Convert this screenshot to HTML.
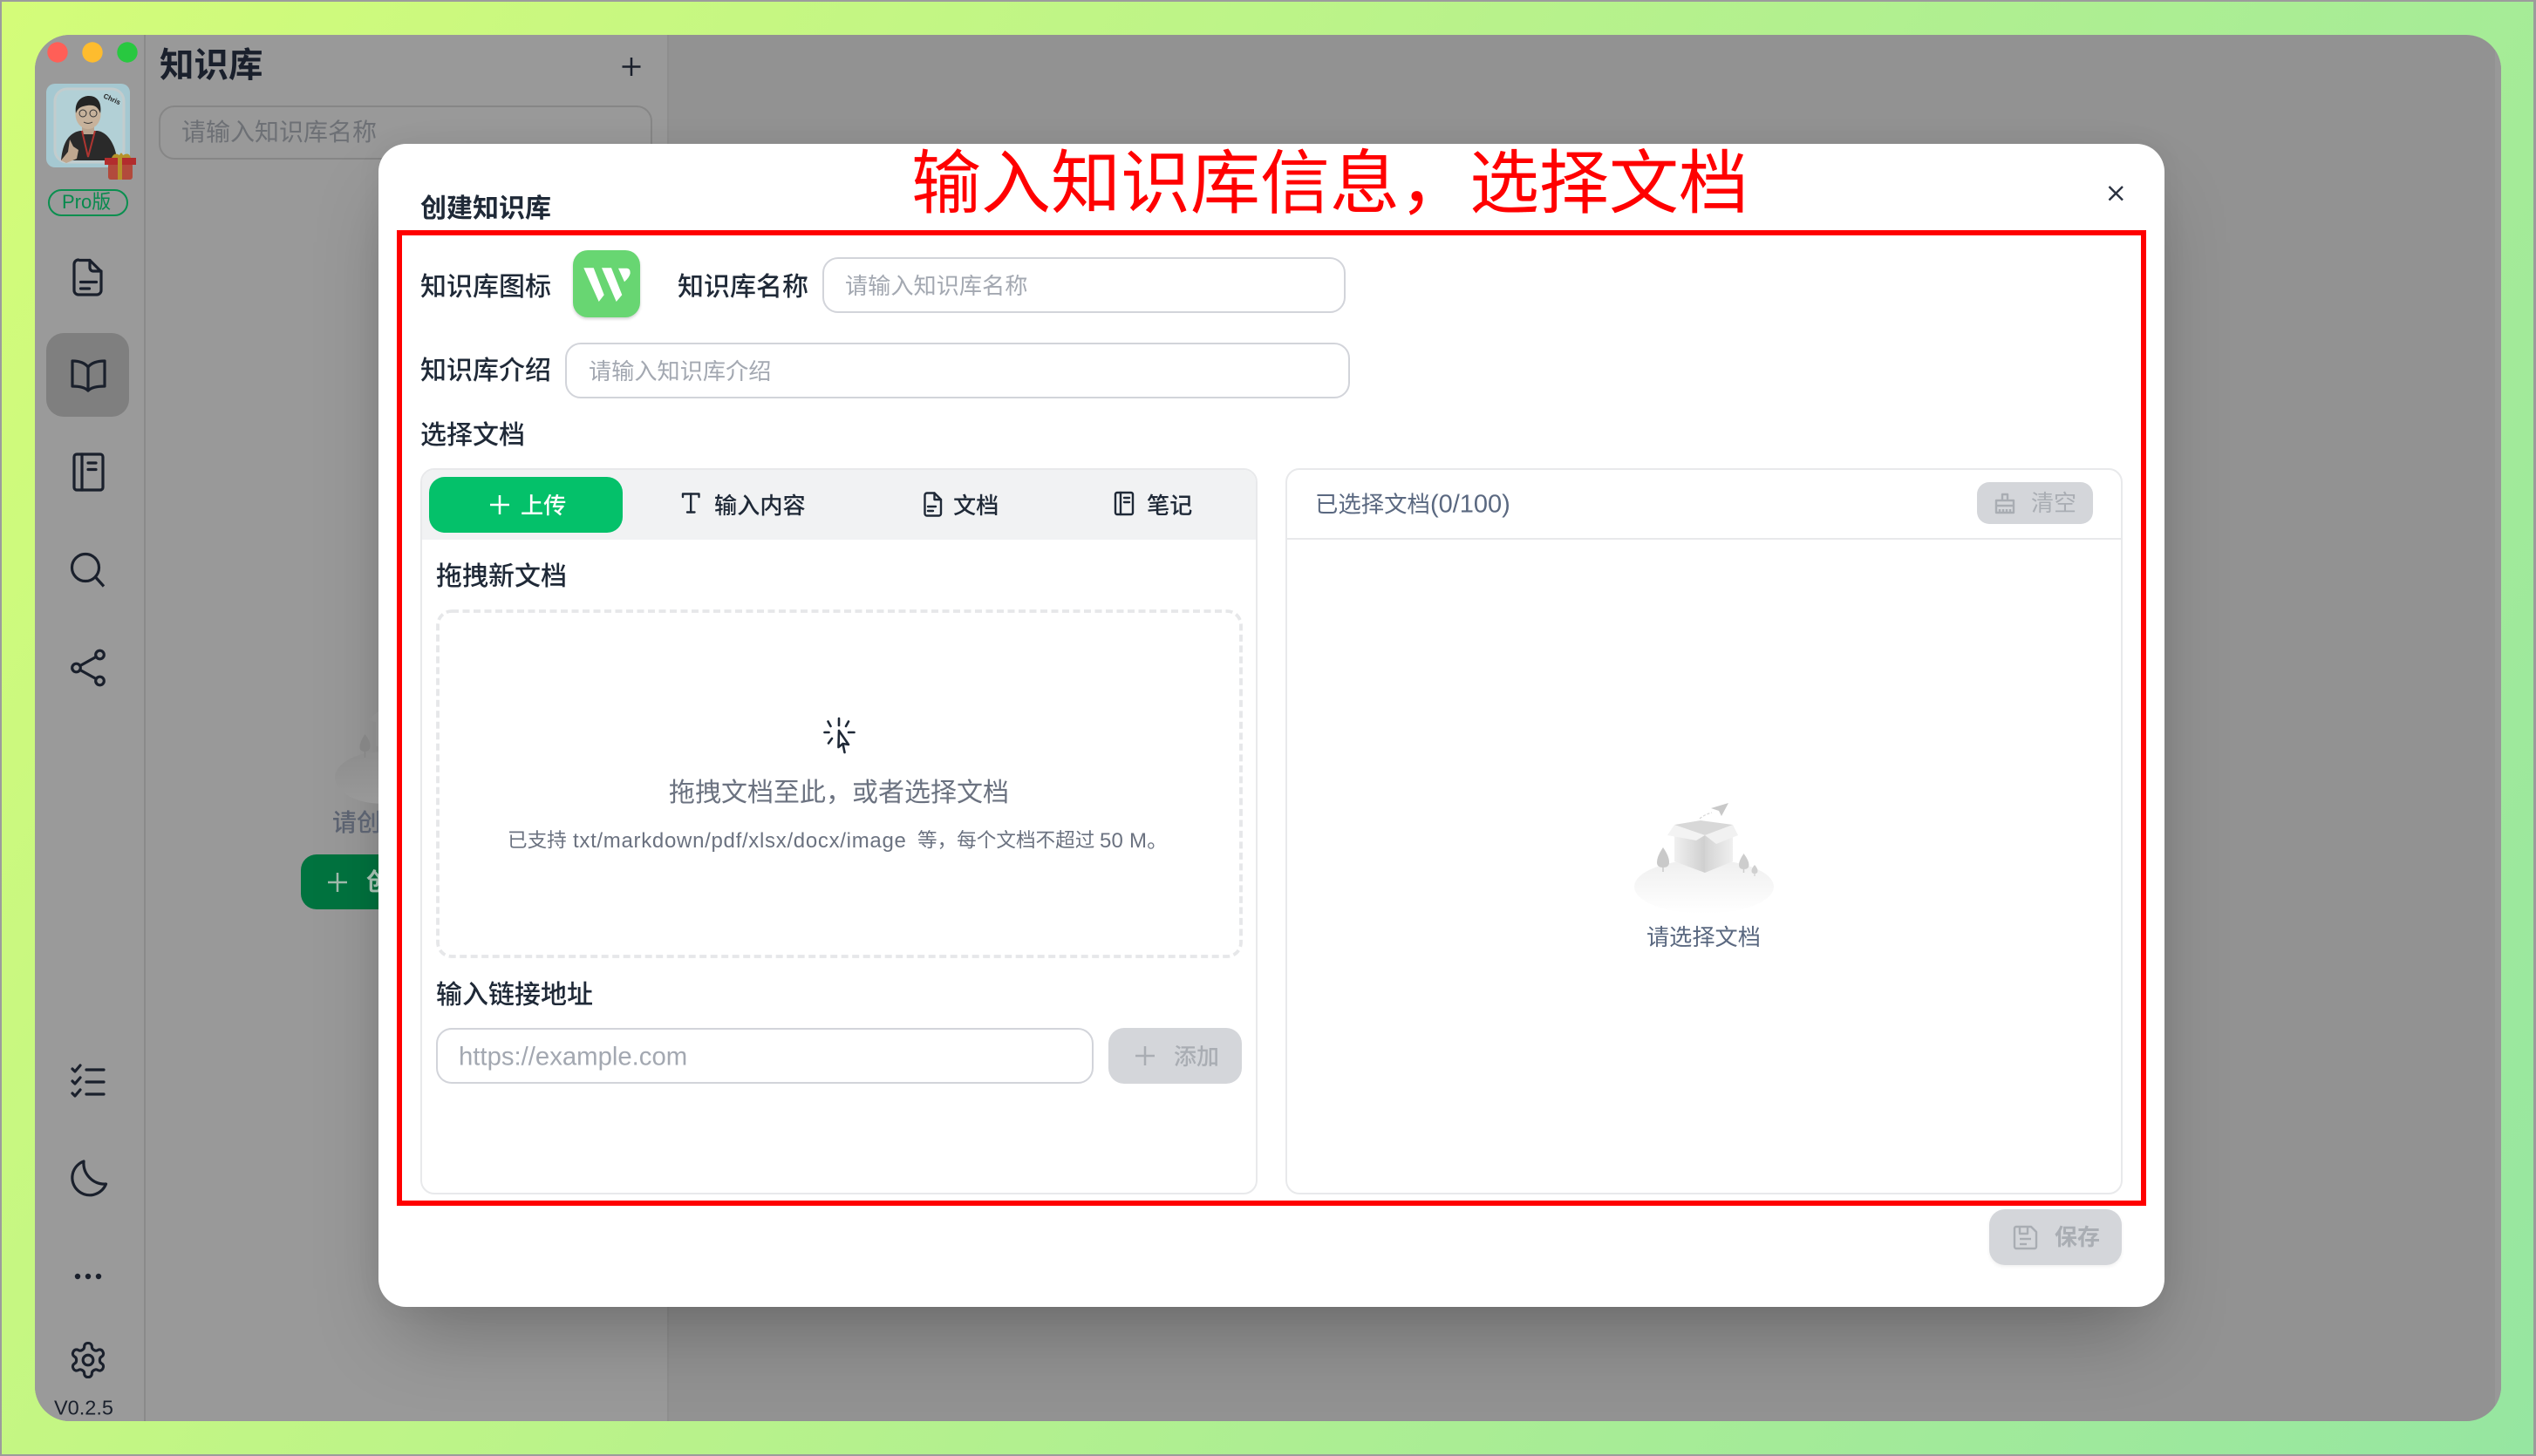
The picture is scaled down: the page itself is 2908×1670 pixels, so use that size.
<!DOCTYPE html>
<html lang="zh"><head><meta charset="utf-8"><title>知识库</title>
<style>
html,body{margin:0;padding:0}
body{width:2908px;height:1670px;overflow:hidden;position:relative;background:#9c9c9c;font-family:"Liberation Sans","Noto Sans CJK SC",sans-serif;color:#1f2937}
#bg{position:absolute;left:2px;top:2px;width:2903px;height:1666px;background:linear-gradient(120deg,#d4fc79 0%,#96e6a1 100%)}
#win{position:absolute;left:40px;top:40px;width:2828px;height:1590px;border-radius:40px;overflow:hidden;background:#929292}
.a{position:absolute}
.t{position:absolute;white-space:nowrap;line-height:1;transform:translateY(calc(-50% + 2px))}
svg{position:absolute;left:0;top:0;overflow:visible}
.input{position:absolute;box-sizing:border-box;background:#fff;border:2px solid #d2d4da;border-radius:18px}
.dis{position:absolute;background:#d4d6da;border-radius:18px}
.g{color:#a9adb3}
.ph{color:#a3a8b1;font-size:26.2px}
.l{font-size:30px;font-weight:500;color:#1f2937}
.s{font-size:22.6px;color:#6b7280}
</style></head><body>
<div id="bg"></div>
<div id="win">
  <div class="a" style="left:0;top:0;width:125px;height:1590px;background:#9a9a9a"></div>
  <div class="a" style="left:125px;top:0;width:2px;height:1590px;background:#8a8a8a"></div>
  <div class="a" style="left:127px;top:0;width:599px;height:1590px;background:#999"></div>
  <div class="a" style="left:725px;top:0;width:2px;height:1590px;background:#8e8e8e"></div>
  <div class="a" style="left:2821px;top:0;width:7px;height:1590px;background:#989898"></div>
  <div class="a" style="left:142px;top:81px;width:566px;height:62px;box-sizing:border-box;border:2px solid #868686;border-radius:18px"></div>
  <div class="a" style="left:305px;top:940px;width:200px;height:63px;border-radius:18px;background:#00733f"></div>
  <div class="a" style="left:13px;top:342px;width:95px;height:96px;border-radius:20px;background:#7f7f7f"></div>
  <div class="a" style="left:394px;top:125px;width:2048px;height:1334px;border-radius:32px;box-shadow:0 46px 93px -22px rgba(0,0,0,.28),0 0 30px rgba(0,0,0,.05)"></div>
</div>

<div class="t" style="left:183px;top:74px;font-size:39.500px;font-weight:700;color:#1a202c">知识库</div>
<div class="t" style="left:208px;top:150px;font-size:28px;color:#6d7075">请输入知识库名称</div>
<div class="t" style="left:381px;top:942px;font-size:28px;color:#5b6270;font-weight:500">请创建</div>
<div class="t" style="left:420px;top:1010px;font-size:28px;color:#9fb8aa;font-weight:700">创建</div>
<div class="t" style="left:71px;top:230px;font-size:22px;color:#078a4d">Pro版</div>
<div class="a" style="left:55px;top:217px;width:92px;height:31px;box-sizing:border-box;border:2.5px solid #0a8f4f;border-radius:16px"></div>
<div class="t" style="left:62px;top:1613px;font-size:23.500px;color:#1a202c">V0.2.5</div>

<!-- sidebar svg -->
<svg width="2908" height="1670" viewBox="0 0 2908 1670" fill="none">
  <defs>
    <linearGradient id="hill" x1="0" y1="0" x2="0" y2="1"><stop offset="0" stop-color="#efefef"/><stop offset="1" stop-color="#fff"/></linearGradient>
    <linearGradient id="hill2" x1="0" y1="0" x2="0" y2="1"><stop offset="0" stop-color="#8d8d8d"/><stop offset="1" stop-color="#999"/></linearGradient>
    <linearGradient id="boxl" x1="0" y1="0" x2="1" y2="0"><stop offset="0" stop-color="#f0f0f0"/><stop offset="1" stop-color="#cfcfcf"/></linearGradient>
    <linearGradient id="boxr" x1="0" y1="0" x2="1" y2="0"><stop offset="0" stop-color="#d4d4d4"/><stop offset="1" stop-color="#efefef"/></linearGradient>
  </defs>
  <circle cx="66" cy="60" r="11.7" fill="#ff5f57"/><circle cx="106" cy="60" r="11.7" fill="#febc2e"/><circle cx="146" cy="60" r="11.7" fill="#28c840"/>
  <rect x="53" y="96" width="96" height="96" rx="10" fill="#a5c8d1"/>
  <rect x="63" y="102" width="79" height="84" rx="14" fill="#b2d0d6" stroke="#c2cccd" stroke-width="3"/>
  <path d="M70 184 C72 162 80 152 92 150 L112 150 C124 152 132 166 134 182 L120 184 Z" fill="#2a2a2a"/>
  <path d="M70 184 L78 174 L80 160 L84 168 L90 172 L88 182 L76 187 Z" fill="#bfa78f"/>
  <rect x="94" y="140" width="14" height="14" fill="#b9a48f"/>
  <ellipse cx="101" cy="131" rx="14.5" ry="17" fill="#c7b29b"/>
  <path d="M87 130 C85 116 94 110 102 110 C112 110 117 118 115 130 C112 122 108 120 100 121 C93 122 89 124 87 130 Z" fill="#242424"/>
  <circle cx="95" cy="130" r="4" stroke="#333" stroke-width="1"/><circle cx="107" cy="130" r="4" stroke="#333" stroke-width="1"/>
  <path d="M96 140 q5 3 10 0" stroke="#333" stroke-width="1"/>
  <path d="M94 150 L101 180 L109 150" stroke="#ae3531" stroke-width="2"/>
  <text x="118" y="112" font-size="8" font-weight="700" fill="#222" font-family="Liberation Sans" transform="rotate(24 118 112)">Chris</text>
  <path d="M128 181 q3-7 9-3 q2-5 4 0 q7-4 9 3z" fill="#b5922a"/>
  <rect x="124" y="187" width="28" height="19" rx="3" fill="#b24a3c"/>
  <rect x="120" y="181" width="36" height="8" fill="#b22d2d"/>
  <rect x="135" y="181" width="5" height="25" fill="#b5922a"/>

  <g stroke="#1a202c" stroke-width="3.2" stroke-linecap="round" stroke-linejoin="round">
    <path d="M91 298.5 h12 l13 13 v21.5 a5 5 0 0 1-5 5 h-21 a5 5 0 0 1-5-5 v-30 a5 5 0 0 1 5-5 z"/>
    <path d="M103 298.5 v8.5 a4 4 0 0 0 4 4 h9"/><path d="M92.5 323.5 h18"/><path d="M92.5 331 h10"/>
    <path d="M83 414 c7 0 14 2 18 7 c4-5 11-7 19-7 v29 c-8 0-15 1-19 5 c-4-4-11-5-18-5 z"/><path d="M101 421 v27"/>
    <rect x="85" y="521" width="33" height="41" rx="3"/><path d="M94 521 v41"/><path d="M101 531 h9"/><path d="M101 538.5 h9"/>
    <circle cx="98" cy="651" r="15.5"/><path d="M110 662.500 l9 10" stroke-linecap="butt"/>
    <circle cx="87.5" cy="766" r="4.8"/><circle cx="114.5" cy="751" r="4.8"/><circle cx="114.5" cy="781" r="4.8"/>
    <path d="M92 763.5 L110 753.5"/><path d="M92 768.5 L110 778.5"/>
    <path d="M83 1226 l3 3 l6-7"/><path d="M83 1240 l3 3 l6-7"/><path d="M83 1254 l3 3 l6-7"/>
    <path d="M99 1227 h20"/><path d="M99 1241 h20"/><path d="M99 1255 h20"/>
    <path d="M96 1332 a20 20 0 1 0 25.5 26 a24 24 0 0 1 -25.5 -26 z"/>
    <g transform="translate(77.6,1536.6) scale(1.95)" stroke-width="1.6">
      <path d="M12.22 2h-.44a2 2 0 0 0-2 2v.18a2 2 0 0 1-1 1.73l-.43.25a2 2 0 0 1-2 0l-.15-.08a2 2 0 0 0-2.73.73l-.22.38a2 2 0 0 0 .73 2.73l.15.1a2 2 0 0 1 1 1.72v.51a2 2 0 0 1-1 1.74l-.15.09a2 2 0 0 0-.73 2.73l.22.38a2 2 0 0 0 2.73.73l.15-.08a2 2 0 0 1 2 0l.43.25a2 2 0 0 1 1 1.73V20a2 2 0 0 0 2 2h.44a2 2 0 0 0 2-2v-.18a2 2 0 0 1 1-1.73l.43-.25a2 2 0 0 1 2 0l.15.08a2 2 0 0 0 2.73-.73l.22-.39a2 2 0 0 0-.73-2.73l-.15-.08a2 2 0 0 1-1-1.74v-.5a2 2 0 0 1 1-1.74l.15-.09a2 2 0 0 0 .73-2.73l-.22-.38a2 2 0 0 0-2.73-.73l-.15.08a2 2 0 0 1-2 0l-.43-.25a2 2 0 0 1-1-1.73V4a2 2 0 0 0-2-2z"/>
      <circle cx="12" cy="12" r="3"/>
    </g>
  </g>
  <circle cx="89" cy="1464" r="3.2" fill="#1a202c"/><circle cx="101" cy="1464" r="3.2" fill="#1a202c"/><circle cx="113" cy="1464" r="3.2" fill="#1a202c"/>
  <path d="M724 66 v21 M713.500 76.500 h21" stroke="#1a202c" stroke-width="2.5"/>
  <path d="M387 1012 h-11 M387 1012 h11 M387 1001 v22" stroke="#9fb8aa" stroke-width="2.5"/>
  <ellipse cx="440" cy="892" rx="56" ry="30" fill="url(#hill2)"/>
  <path d="M418.500 842 q7 9 6 15 q-1 5-6 5 q-6 0-6-5 q0-6 6-15z" fill="#858585"/><path d="M418.500 860 v9" stroke="#858585" stroke-width="1.5"/>
  <path d="M421 826 l13-10 v40 h-3 v-28 z" fill="#8d8d8d"/>
</svg>

<!-- modal -->
<div class="a" style="left:434px;top:165px;width:2048px;height:1334px;background:#fff;border-radius:32px"></div>
<div class="t" style="left:482px;top:238px;font-size:30px;font-weight:700">创建知识库</div>
<div class="t" style="left:1045px;top:209px;font-size:80px;color:#ff0000">输入知识库信息，选择文档</div>

<div class="t l" style="left:482px;top:328px">知识库图标</div>
<div class="a" style="left:657px;top:287px;width:77px;height:77px;border-radius:17px;background:#68d672;box-shadow:0 2px 3px rgba(0,0,0,.18)"></div>
<div class="t l" style="left:777px;top:328px">知识库名称</div>
<div class="input" style="left:943px;top:295px;width:600px;height:64px"></div>
<div class="t ph" style="left:969px;top:326px">请输入知识库名称</div>
<div class="t l" style="left:482px;top:424px">知识库介绍</div>
<div class="input" style="left:648px;top:393px;width:900px;height:64px"></div>
<div class="t ph" style="left:675px;top:424px">请输入知识库介绍</div>
<div class="t l" style="left:482px;top:498px">选择文档</div>

<!-- left panel -->
<div class="a" style="left:482px;top:537px;width:960px;height:833px;box-sizing:border-box;border:2px solid #e8e9eb;border-radius:16px;overflow:hidden;background:#fff">
  <div class="a" style="left:-2px;top:-2px;width:960px;height:82px;background:#f1f2f3"></div>
</div>
<div class="a" style="left:492px;top:547px;width:222px;height:64px;border-radius:18px;background:#04c16a"></div>
<div class="t" style="left:597px;top:578px;font-size:26.200px;color:#fff;font-weight:500">上传</div>
<div class="t" style="left:819px;top:578px;font-size:26.200px;font-weight:500">输入内容</div>
<div class="t" style="left:1093px;top:578px;font-size:26.200px;font-weight:500">文档</div>
<div class="t" style="left:1315px;top:578px;font-size:26.200px;font-weight:500">笔记</div>
<div class="t l" style="left:500px;top:660px">拖拽新文档</div>
<div class="t" style="left:767px;top:908px;font-size:30px;color:#6b7280">拖拽文档至此，或者选择文档</div>
<div class="t s" style="left:582px;top:963px">已支持</div>
<div class="t s" style="left:657px;top:963px;font-size:24px;letter-spacing:.7px">txt/markdown/pdf/xlsx/docx/image</div>
<div class="t s" style="left:1052px;top:963px">等，每个文档不超过</div>
<div class="t s" style="left:1261px;top:963px;font-size:24px;letter-spacing:.2px">50 M。</div>
<div class="t l" style="left:500px;top:1140px">输入链接地址</div>
<div class="input" style="left:500px;top:1179px;width:754px;height:64px"></div>
<div class="t" style="left:526px;top:1210px;font-size:29.300px;color:#a3a8b1">https://example.com</div>
<div class="dis" style="left:1271px;top:1179px;width:153px;height:64px"></div>
<div class="t g" style="left:1346px;top:1210px;font-size:26px;font-weight:500">添加</div>

<!-- right panel -->
<div class="a" style="left:1474px;top:537px;width:960px;height:833px;box-sizing:border-box;border:2px solid #e8e9eb;border-radius:16px"></div>
<div class="a" style="left:1476px;top:617px;width:956px;height:2px;background:#e8e9eb"></div>
<div class="t" style="left:1508px;top:577px;font-size:26.400px;color:#5a6880">已选择文档<span style="font-size:29px">(0/100)</span></div>
<div class="dis" style="left:2267px;top:553px;width:133px;height:48px;border-radius:14px"></div>
<div class="t g" style="left:2329px;top:575px;font-size:26px">清空</div>
<div class="t" style="left:1888px;top:1073px;font-size:26.200px;color:#5a6880">请选择文档</div>
<div class="dis" style="left:2281px;top:1387px;width:152px;height:64px;box-shadow:0 2px 4px rgba(0,0,0,.06)"></div>
<div class="t g" style="left:2356px;top:1417px;font-size:26px;font-weight:700">保存</div>

<svg width="2908" height="1670" viewBox="0 0 2908 1670" fill="none">
  <path d="M669.300 307.300 H680.700 L692.700 338.300 L686.700 346 Z" fill="#fff"/>
  <path d="M690 307.300 H701 L713.300 338.300 L706.700 346 Z" fill="#fff"/>
  <path d="M709 307.700 H719 Q722.700 308 722.700 313.300 Q722 318 716 323.300 Z" fill="#fff"/>

  <path d="M573 568 v22 M562 579 h22" stroke="#fff" stroke-width="2.500"/>
  <g stroke="#1f2937" stroke-width="2.400" stroke-linecap="round" stroke-linejoin="round">
    <path d="M783 570 v-3.500 h18.500 v3.500"/><path d="M792.200 566.500 v21"/><path d="M788 587.500 h8.500"/>
    <path d="M1063 565.500 h8.500 l7.500 7.500 v16 a2.500 2.500 0 0 1-2.500 2.500 h-13.500 a2.500 2.500 0 0 1-2.500-2.500 v-21 a2.500 2.500 0 0 1 2.500-2.500 z"/>
    <path d="M1071.500 565.500 v7.500 h7.500"/><path d="M1064 581 h9"/><path d="M1064 586 h6"/>
    <rect x="1279" y="565" width="20" height="25" rx="2"/><path d="M1285 565 v25"/><path d="M1289 571 h6"/><path d="M1289 576 h6"/>
  </g>
  <rect x="502" y="701" width="921" height="396" rx="16" stroke="#e6e7e9" stroke-width="3.800" stroke-dasharray="8 4.500"/>
  <g stroke="#1f2937" stroke-width="2.600" stroke-linecap="round" stroke-linejoin="round">
    <path d="M962 824 v8"/><path d="M973 827.500 l-3 5.500"/><path d="M949.500 827.500 l3 5.500"/><path d="M945.500 840 h5"/><path d="M973 840 h6.500"/><path d="M954 847 l-4 5.500"/>
    <path d="M962 838 L973 854 L966.500 853 L968.500 863 M962 838 L961.500 857 L966.500 853" />
  </g>
  <path d="M1313 1200 v22 M1302 1211 h22" stroke="#a9adb3" stroke-width="2.500"/>
  <g stroke="#a9adb3" stroke-width="2.400" stroke-linejoin="round">
    <path d="M2296 574 v-7 h6 v7"/><path d="M2289 574 h20 v14 h-20 z"/><path d="M2289 580 h20"/><path d="M2293 584 v5 M2297 584 v5 M2301 584 v5 M2305 584 v5"/>
    <path d="M2312 1407 h17 l6 6 v17 a2 2 0 0 1-2 2 h-21 a2 2 0 0 1-2-2 v-21 a2 2 0 0 1 2-2 z"/>
    <path d="M2316 1407 v8 h9 v-8"/><path d="M2316 1421 h13"/><path d="M2316 1427 h8"/>
  </g>
  <!-- illustration -->
  <ellipse cx="1954" cy="1017" rx="80" ry="31" fill="url(#hill)"/>
  <path d="M1907 972 q7 10 7 17 q0 6-7 6 q-7 0-7-6 q0-7 7-17z" fill="#c9c9c9"/><path d="M1907 993 v7" stroke="#c9c9c9" stroke-width="1.500"/>
  <path d="M1999.500 979 q6 8 6 13 q0 5-6 5 q-5.500 0-5.500-5 q0-5 5.500-13z" fill="#cdcdcd"/><path d="M1999.500 996 v5" stroke="#cdcdcd" stroke-width="1.500"/>
  <path d="M2012 992 q3.500 4 3.500 7 q0 3-3.500 3 q-3.500 0-3.500-3 q0-3 3.500-7z" fill="#d0d0d0"/><path d="M2012 1001 v4" stroke="#d0d0d0" stroke-width="1.200"/>
  <path d="M1920 946 L1955 958 V1001 L1920 988 Z" fill="url(#boxl)"/>
  <path d="M1955 958 L1987 946 V988 L1955 1001 Z" fill="url(#boxr)"/>
  <path d="M1920 946 L1950 941 L1987 946 L1955 958 Z" fill="#d8d8d8"/>
  <path d="M1920 946 L1912 958 L1945 964 L1955 958 Z" fill="#f3f3f3"/>
  <path d="M1987 946 L1993 958 L1968 968 L1955 958 Z" fill="#f1f1f1"/>
  <path d="M1982 921 L1962 927 L1971 930 L1974 936 Z" fill="#c9c9c9"/>
  <path d="M1949 939 q6-5 14-7" stroke="#d5d5d5" stroke-width="1.200" stroke-dasharray="3 2"/>
  <path d="M2418.500 214 L2434 229.500 M2434 214 L2418.500 229.500" stroke="#2a3140" stroke-width="2.400"/>
</svg>
<div class="a" style="left:455px;top:264px;width:2006px;height:1119px;box-sizing:border-box;border:6px solid #ff0000"></div>
</body></html>
